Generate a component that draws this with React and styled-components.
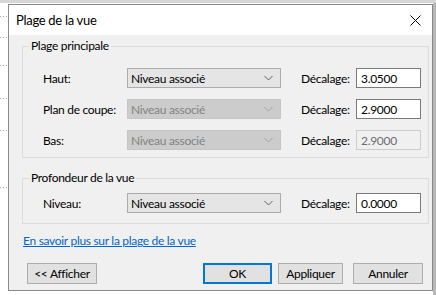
import React from "react";
import styled, { createGlobalStyle } from "styled-components";

const Global = createGlobalStyle`
  html, body { margin: 0; padding: 0; background: #ffffff; }
  body { font-family: Lato, "Noto Sans", sans-serif; font-size: 12px; color: #000; letter-spacing: -0.3px; }
  * { box-sizing: border-box; }
`;

const Backdrop = styled.div`
  width: 436px;
  height: 295px;
  overflow: hidden;
  padding: 4px 0 0 8px;
  background:
    linear-gradient(#d6d6d6, #d6d6d6) 0 0 / 436px 3px no-repeat,
    linear-gradient(90deg, transparent 433px, #b8b8b8 433px) 0 0 / 436px 295px no-repeat,
    repeating-linear-gradient(90deg, #a8a8a8 0 1px, transparent 1px 3px) 0 16px / 8px 1px no-repeat,
    repeating-linear-gradient(90deg, #a8a8a8 0 1px, transparent 1px 3px) 0 37px / 8px 1px no-repeat,
    repeating-linear-gradient(90deg, #a8a8a8 0 1px, transparent 1px 3px) 0 65px / 8px 1px no-repeat,
    repeating-linear-gradient(90deg, #a8a8a8 0 1px, transparent 1px 3px) 0 98px / 8px 1px no-repeat,
    repeating-linear-gradient(90deg, #a8a8a8 0 1px, transparent 1px 3px) 0 130px / 8px 1px no-repeat,
    repeating-linear-gradient(90deg, #a8a8a8 0 1px, transparent 1px 3px) 0 187px / 8px 1px no-repeat,
    #ffffff;
`;

const Dialog = styled.div`
  width: 425px;
  height: 287px;
  border: 1px solid #8a8a8a;
  background: #f0f0f0;
  display: flex;
  flex-direction: column;
`;

const TitleBar = styled.div`
  height: 30px;
  background: #ffffff;
  display: flex;
  align-items: center;
  justify-content: space-between;
  padding: 0 11px 0 7px;
`;

const Title = styled.span`
  font-size: 13px;
`;

const CloseIcon = () => (
  <svg width="11" height="11" viewBox="0 0 11 11">
    <path d="M0.5 0.5 L10.5 10.5 M10.5 0.5 L0.5 10.5" stroke="#000" strokeWidth="1" fill="none" />
  </svg>
);

const Body = styled.div`
  flex: 1;
  display: flex;
  flex-direction: column;
  padding: 3px 3px 0 13px;
`;

const Group = styled.fieldset`
  margin: 0 0 ${(p) => p.$mb}px 0;
  padding: ${(p) => p.$pt}px 0 ${(p) => p.$pb}px 0;
  border: 1px solid #dcdcdc;
  min-width: 0;
  display: flex;
  flex-direction: column;
  gap: 11px;
`;

const Legend = styled.legend`
  margin-left: 6px;
  padding: 0 2px;
  line-height: 16px;
  font-size: 12px;
`;

const Row = styled.div`
  display: grid;
  grid-template-columns: 84px 154px 20px 55px 65px;
  align-items: center;
  height: 20px;
  padding-left: 20px;
`;

const Label = styled.span``;

const Combo = styled.div`
  height: 20px;
  border: 1px solid ${(p) => (p.$disabled ? "#c5c5c5" : "#acacac")};
  background: ${(p) => (p.$disabled ? "#cccccc" : "#e5e5e5")};
  color: ${(p) => (p.$disabled ? "#838383" : "#000")};
  display: flex;
  align-items: center;
  justify-content: space-between;
  padding: 0 7px 0 3px;
`;

const Chevron = ({ color }) => (
  <svg width="9" height="6" viewBox="0 0 9 6">
    <path d="M0.5 1 L4.5 5 L8.5 1" stroke={color} strokeWidth="1" fill="none" />
  </svg>
);

const Field = styled.div`
  grid-column: 5;
  height: 20px;
  border: 1px solid ${(p) => (p.$disabled ? "#cccccc" : "#7a7a7a")};
  background: ${(p) => (p.$disabled ? "#f0f0f0" : "#ffffff")};
  color: ${(p) => (p.$disabled ? "#6d6d6d" : "#000")};
  display: flex;
  align-items: center;
  padding-left: 4px;
`;

const Offset = styled.span`
  grid-column: 4;
`;

const Link = styled.a`
  color: #0066cc;
  text-decoration: underline;
  line-height: 16px;
  margin: 0 0 0 1px;
  cursor: pointer;
`;

const Buttons = styled.div`
  display: flex;
  margin-top: 14px;
  padding-left: 5px;
`;

const Button = styled.button`
  width: ${(p) => p.$w}px;
  height: 21px;
  margin-left: ${(p) => p.$ml || 0}px;
  font-family: inherit;
  font-size: 12px;
  letter-spacing: inherit;
  color: #000;
  background: #e1e1e1;
  border: ${(p) => (p.$default ? "2px solid #0078d7" : "1px solid #adadad")};
  padding: 0;
`;

const RowItem = ({ label, comboDisabled, fieldDisabled, value }) => (
  <Row>
    <Label>{label}</Label>
    <Combo $disabled={comboDisabled}>
      <span>Niveau associé</span>
      <Chevron color={comboDisabled ? "#a0a0a0" : "#606060"} />
    </Combo>
    <Offset>Décalage:</Offset>
    <Field $disabled={fieldDisabled}>{value}</Field>
  </Row>
);

export default function App() {
  return (
    <>
      <Global />
      <Backdrop>
        <Dialog>
          <TitleBar>
            <Title>Plage de la vue</Title>
            <CloseIcon />
          </TitleBar>
          <Body>
            <Group $pt={14} $pb={7} $mb={12}>
              <Legend>Plage principale</Legend>
              <RowItem label="Haut:" value="3.0500" />
              <RowItem label="Plan de coupe:" comboDisabled value="2.9000" />
              <RowItem label="Bas:" comboDisabled fieldDisabled value="2.9000" />
            </Group>
            <Group $pt={7} $pb={10} $mb={9}>
              <Legend>Profondeur de la vue</Legend>
              <RowItem label="Niveau:" value="0.0000" />
            </Group>
            <Link>En savoir plus sur la plage de la vue</Link>
            <Buttons>
              <Button $w={70}>&lt;&lt; Afficher</Button>
              <Button $w={69} $ml={106} $default>OK</Button>
              <Button $w={65} $ml={6}>Appliquer</Button>
              <Button $w={70} $ml={10}>Annuler</Button>
            </Buttons>
          </Body>
        </Dialog>
      </Backdrop>
    </>
  );
}
